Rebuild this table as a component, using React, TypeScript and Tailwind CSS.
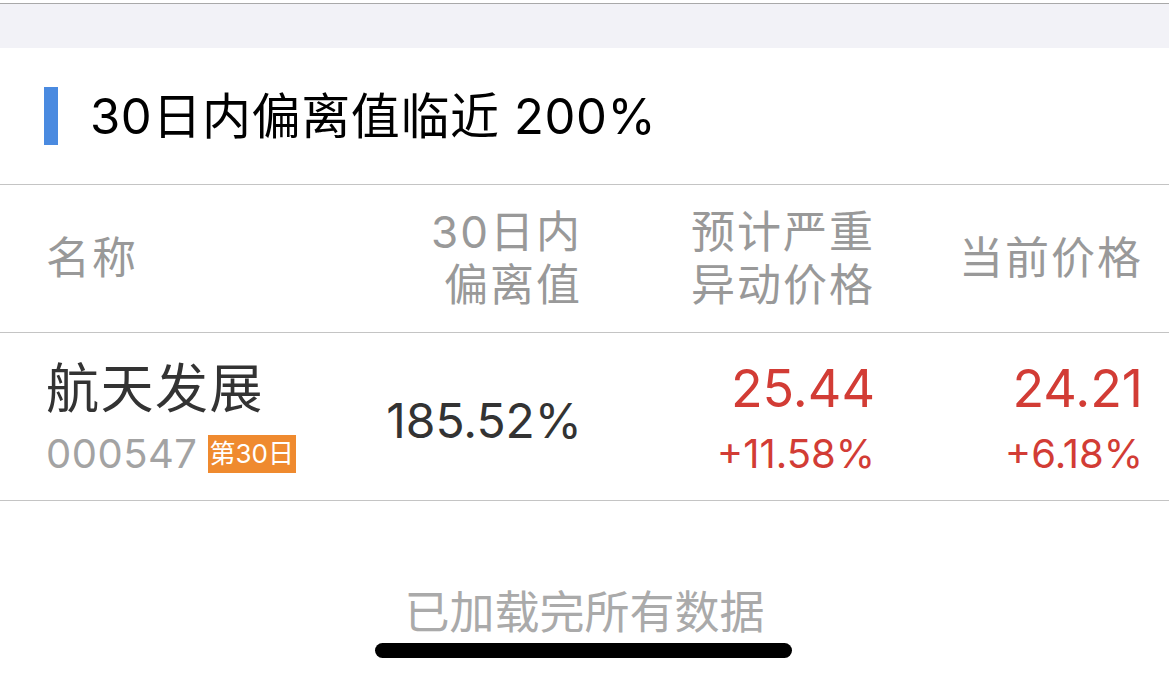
import React from 'react';

const font = { fontFamily: '"Inter", "Noto Sans CJK SC", sans-serif' };

const rows = [
  {
    name: '航天发展',
    code: '000547',
    day: '第30日',
    deviation: '185.52%',
    target: '25.44',
    targetPct: '+11.58%',
    price: '24.21',
    pricePct: '+6.18%',
  },
];

const App = () => {
  return (
    <div className="w-[1169px] h-[678px] bg-white overflow-hidden font-['Inter','Noto_Sans_CJK_SC',sans-serif]" style={font}>
      {/* top band */}
      <div className="h-[45px] bg-[#f2f2f7] border-t border-[#a9a9a9] mt-[3px]" />

      {/* section title */}
      <div className="h-[137px] flex items-center pl-[44px] border-b border-[#c4c4c4]">
        <div className="w-[14px] h-[58px] bg-[#4a8ae0]" />
        <div className="ml-[32px] text-[49px] text-black tracking-[0.6px] leading-none">30日内偏离值临近 200%</div>
      </div>

      {/* header */}
      <div className="grid grid-cols-[300px_236px_293px_268px] pl-[46px] h-[148px] items-center border-b border-[#c4c4c4] text-[#999999] text-[44px] leading-[53px] tracking-[2px]">
        <div>名称</div>
        <div className="text-right">
          <div>30日内</div>
          <div>偏离值</div>
        </div>
        <div className="text-right">
          <div>预计严重</div>
          <div>异动价格</div>
        </div>
        <div className="text-right">当前价格</div>
      </div>

      {/* rows */}
      {rows.map((r) => (
        <div key={r.code} className="grid grid-cols-[300px_236px_293px_268px] pl-[46px] h-[168px] items-center border-b border-[#c4c4c4]">
          <div>
            <div className="text-[53px] leading-[62px] text-[#333333] tracking-[1.5px]">{r.name}</div>
            <div className="flex items-center mt-[12px]">
              <span className="text-[40px] leading-[44px] text-[#a3a3a3] tracking-[0.5px]">{r.code}</span>
              <span className="ml-[10px] bg-[#ef8a2f] text-white text-[26px] leading-[38px] px-[2px]">{r.day}</span>
            </div>
          </div>
          <div className="text-right text-[48px] text-[#333333] mt-[8px]">{r.deviation}</div>
          <div className="text-right text-[#d23c35]">
            <div className="text-[52px] leading-[62px]">{r.target}</div>
            <div className="text-[40px] leading-[44px] mt-[12px]">{r.targetPct}</div>
          </div>
          <div className="text-right text-[#d23c35]">
            <div className="text-[52px] leading-[62px]">{r.price}</div>
            <div className="text-[40px] leading-[44px] mt-[12px]">{r.pricePct}</div>
          </div>
        </div>
      ))}

      {/* footer */}
      <div className="flex flex-col items-center pt-[86px]">
        <div className="text-[45px] leading-[52px] text-[#aaaaaa]">已加载完所有数据</div>
        <div className="w-[417px] h-[15px] rounded-full bg-black mt-[4px] -ml-[2px]" />
      </div>
    </div>
  );
};

export default App;
